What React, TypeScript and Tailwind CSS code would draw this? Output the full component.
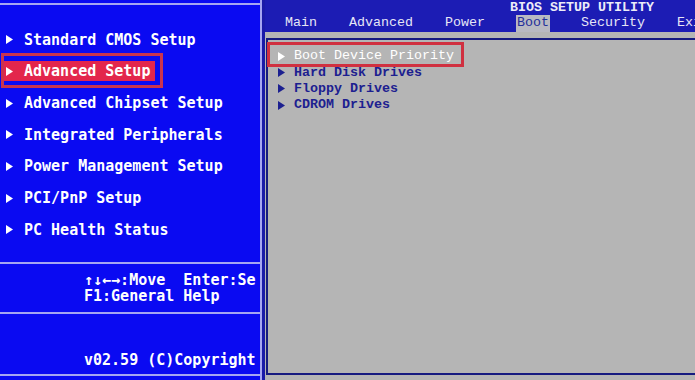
const leftItems = [
  "Standard CMOS Setup",
  "Advanced Setup",
  "Advanced Chipset Setup",
  "Integrated Peripherals",
  "Power Management Setup",
  "PCI/PnP Setup",
  "PC Health Status",
];

const tabs = ["Main", "Advanced", "Power", "Boot", "Security", "Exit"];

const bootItems = ["Boot Device Priority", "Hard Disk Drives", "Floppy Drives", "CDROM Drives"];

function Arrow({ className }: { className: string }) {
  return (
    <svg width="7" height="9" viewBox="0 0 7 9" className={className}>
      <path d="M0 0 L7 4.5 L0 9 Z" fill="currentColor" />
    </svg>
  );
}

function LeftMenu() {
  return (
    <div className="flex flex-col pt-[19px]">
      {leftItems.map((item, i) => (
        <div key={item} className="relative flex items-center h-[31.67px] pl-[4px]">
          <span
            className={
              "inline-flex items-center h-[20px] pl-[2px] pr-[5px] " +
              (i === 1 ? "bg-[#e3264c]" : "")
            }
          >
            <Arrow className="text-white mr-[11px]" />
            <span className="text-white whitespace-pre">{item}</span>
          </span>
          {i === 1 && (
            <span className="absolute left-[1px] top-[-3px] w-[162px] h-[35px] border-[3px] border-[#c9344f]" />
          )}
        </div>
      ))}
    </div>
  );
}

export default function App() {
  return (
    <div className="w-[695px] h-[380px] flex overflow-hidden bg-[#b5b5b5]">
      {/* left panel */}
      <div className="w-[260px] shrink-0 flex flex-col bg-[#0a0af2] font-['DejaVu_Sans_Mono',monospace] font-bold text-[15px] leading-[16px]">
        <div className="mt-[3px] h-[2px] bg-[#a6a6f2]" />
        <LeftMenu />
        <div className="mt-[16px] h-[2px] bg-[#a6a6f2]" />
        <div className="pt-[8px] pl-[84px] text-white whitespace-pre overflow-hidden">
          <div className="h-[16px] overflow-hidden">↑↓←→:Move  Enter:Se</div>
          <div className="h-[16px]">F1:General Help</div>
        </div>
        <div className="mt-[8px] h-[2px] bg-[#a6a6f2]" />
        <div className="mt-[38px] pl-[84px] text-white whitespace-pre">v02.59 (C)Copyright</div>
        <div className="mt-[6px] h-[2px] bg-[#a6a6f2]" />
      </div>
      <div className="w-[2px] shrink-0 bg-[#a6a6f2]" />

      {/* right panel */}
      <div className="flex-1 flex flex-col border-l-[3px] border-[#1a1aa8] font-['Liberation_Mono',monospace] text-[13.33px]">
        <div className="h-[32px] shrink-0 bg-[#1c1cb4] relative">
          <div className="absolute left-[245px] top-[1px] font-bold text-[#ececf8] whitespace-pre leading-[14px]">
            BIOS SETUP UTILITY
          </div>
          <div className="absolute left-[20px] bottom-0 flex gap-[32px]">
            {tabs.map((t) => (
              <span
                key={t}
                className={
                  "h-[17px] leading-[16px] whitespace-pre " +
                  (t === "Boot" ? "bg-[#b9b9c2] text-[#24309a] px-[1px] -mx-[1px]" : "text-[#e6e6f6]")
                }
              >
                {t}
              </span>
            ))}
          </div>
        </div>
        <div className="flex-1 pt-[6px] pb-[5px] pl-[1px]">
          <div className="h-full border-2 border-r-0 border-[#161a80] pt-[8px] pl-[10px]">
            {bootItems.map((item, i) => (
              <div key={item} className="relative flex items-center h-[16.4px]">
                <Arrow className={(i === 0 ? "text-white" : "text-[#1c2090]") + " mr-[9px]"} />
                <span className={(i === 0 ? "text-white" : "text-[#1c2090] font-bold") + " whitespace-pre"}>{item}</span>
                {i === 0 && (
                  <span className="absolute left-[-11px] top-[-6px] w-[197px] h-[25px] border-[3px] border-[#d03040]" />
                )}
              </div>
            ))}
          </div>
        </div>
      </div>
    </div>
  );
}
